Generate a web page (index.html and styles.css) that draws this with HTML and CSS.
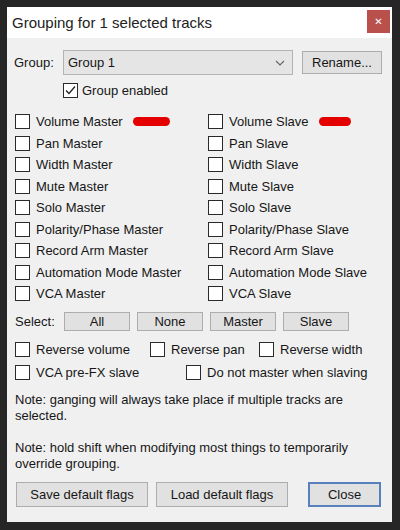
FILE: index.html
```html
<!DOCTYPE html>
<html lang="en">
<head>
    <meta charset="UTF-8">
    <title>Grouping for 1 selected tracks</title>
    <link rel="stylesheet" href="styles.css">
</head>
<body>
    <div class="window">
        <!-- Заголовок окна -->
        <div class="titlebar">
            <span class="title">Grouping for 1 selected tracks</span>
            <button class="close-x">&#x2715;</button>
        </div>

        <div class="content">
            <div class="group-row">
                <span class="group-label">Group:</span>
                <div class="combo">
                    <span>Group 1</span>
                    <svg class="chevron" width="10" height="6" viewBox="0 0 10 6"><path d="M1 1 L5 5 L9 1" fill="none" stroke="#666" stroke-width="1.2"/></svg>
                </div>
                <button class="btn rename">Rename...</button>
            </div>

            <label class="check enabled-row">
                <span class="box checked">
                    <svg width="13" height="13" viewBox="0 0 13 13"><path d="M2 6.5 L5 9.5 L11 2.5" fill="none" stroke="#222" stroke-width="1.3"/></svg>
                </span>
                Group enabled
            </label>

            <!-- Флаги master / slave -->
            <div class="flags">
                <label class="check"><span class="box"></span>Volume Master<span class="mark"></span></label>
                <label class="check"><span class="box"></span>Volume Slave<span class="mark short"></span></label>
                <label class="check"><span class="box"></span>Pan Master</label>
                <label class="check"><span class="box"></span>Pan Slave</label>
                <label class="check"><span class="box"></span>Width Master</label>
                <label class="check"><span class="box"></span>Width Slave</label>
                <label class="check"><span class="box"></span>Mute Master</label>
                <label class="check"><span class="box"></span>Mute Slave</label>
                <label class="check"><span class="box"></span>Solo Master</label>
                <label class="check"><span class="box"></span>Solo Slave</label>
                <label class="check"><span class="box"></span>Polarity/Phase Master</label>
                <label class="check"><span class="box"></span>Polarity/Phase Slave</label>
                <label class="check"><span class="box"></span>Record Arm Master</label>
                <label class="check"><span class="box"></span>Record Arm Slave</label>
                <label class="check"><span class="box"></span>Automation Mode Master</label>
                <label class="check"><span class="box"></span>Automation Mode Slave</label>
                <label class="check"><span class="box"></span>VCA Master</label>
                <label class="check"><span class="box"></span>VCA Slave</label>
            </div>

            <div class="select-row">
                <span class="select-label">Select:</span>
                <button class="btn small">All</button>
                <button class="btn small">None</button>
                <button class="btn small">Master</button>
                <button class="btn small">Slave</button>
            </div>

            <div class="opt-row">
                <label class="check w135"><span class="box"></span>Reverse volume</label>
                <label class="check w109"><span class="box"></span>Reverse pan</label>
                <label class="check"><span class="box"></span>Reverse width</label>
            </div>
            <div class="opt-row second">
                <label class="check w171"><span class="box"></span>VCA pre-FX slave</label>
                <label class="check"><span class="box"></span>Do not master when slaving</label>
            </div>

            <p class="note">Note: ganging will always take place if multiple tracks are selected.</p>
            <p class="note gap">Note: hold shift when modifying most things to temporarily override grouping.</p>

            <div class="bottom-row">
                <button class="btn wide">Save default flags</button>
                <button class="btn wide">Load default flags</button>
                <button class="btn close">Close</button>
            </div>
        </div>
    </div>
</body>
</html>
```

FILE: styles.css
```css
/* Основные стили */
body {
    margin: 0;
    width: 400px;
    height: 530px;
    background-color: #262626;
    font-family: "Liberation Sans", Arial, sans-serif;
    font-size: 13px;
    color: #161616;
    overflow: hidden;
}
.window {
    margin: 7px;
    width: 385px;
    height: 515px;
    background-color: #f0f0f0;
    display: flex;
    flex-direction: column;
}
.titlebar {
    height: 31px;
    background-color: #fff;
    display: flex;
    justify-content: space-between;
    align-items: center;
    padding-left: 5px;
    padding-right: 2px;
}
.title {
    font-size: 15px;
    color: #222;
}
.close-x {
    align-self: flex-start;
    margin-top: 3px;
    width: 23px;
    height: 23px;
    border: none;
    padding: 0;
    background-color: #b9504c;
    color: #fff;
    font-size: 10px;
    font-weight: bold;
    font-family: "DejaVu Sans", sans-serif;
}
.content {
    padding-left: 8px;
    display: flex;
    flex-direction: column;
}
button {
    font-family: inherit;
    font-size: 13px;
    color: #161616;
}
.btn {
    background-color: #e1e1e1;
    border: 1px solid #adadad;
    padding: 0;
}
.group-row {
    margin-top: 12px;
    height: 25px;
    display: flex;
    align-items: center;
}
.group-label {
    width: 49px;
    margin-left: -1px;
}
.combo {
    width: 230px;
    height: 25px;
    box-sizing: border-box;
    border: 1px solid #b4b4b4;
    background-color: #e5e5e5;
    display: flex;
    align-items: center;
    justify-content: space-between;
    padding: 0 7px 0 4px;
}
.rename {
    margin-left: 9px;
    width: 80px;
    height: 23px;
}
.check {
    display: flex;
    align-items: center;
    white-space: nowrap;
}
.box {
    width: 13px;
    height: 13px;
    border: 1px solid #2a2a2a;
    background-color: #fff;
    margin-right: 6px;
    flex-shrink: 0;
    display: flex;
    align-items: center;
    justify-content: center;
}
.box.checked {
    margin-right: 4px;
}
.enabled-row {
    margin-top: 7px;
    margin-left: 48px;
    height: 17px;
}
.flags {
    margin-top: 12px;
    display: grid;
    grid-template-columns: 193px 1fr;
    grid-auto-rows: 21.5px;
}
.mark {
    display: inline-block;
    width: 37px;
    height: 9px;
    border-radius: 5px;
    background-color: #e50000;
    margin-left: 10px;
}
.mark.short {
    width: 32px;
}
.select-row {
    margin-top: 7px;
    height: 19px;
    display: flex;
    align-items: center;
    gap: 7px;
}
.select-label {
    width: 49px;
    margin-right: -7px;
}
.small {
    width: 66px;
    height: 19px;
}
.opt-row {
    margin-top: 9px;
    height: 20px;
    display: flex;
    align-items: center;
}
.opt-row.second {
    margin-top: 3px;
}
.w135 { width: 135px; }
.w109 { width: 109px; }
.w171 { width: 171px; }
.note {
    margin: 9px 0 0 0;
    width: 365px;
    line-height: 16px;
}
.note.gap {
    margin-top: 16px;
}
.bottom-row {
    margin-top: 10px;
    margin-left: 1px;
    display: flex;
    gap: 8px;
}
.wide {
    width: 132px;
    height: 25px;
}
.close {
    margin-left: 12px;
    width: 73px;
    height: 25px;
    border: 2px solid #5880bd;
}
```
